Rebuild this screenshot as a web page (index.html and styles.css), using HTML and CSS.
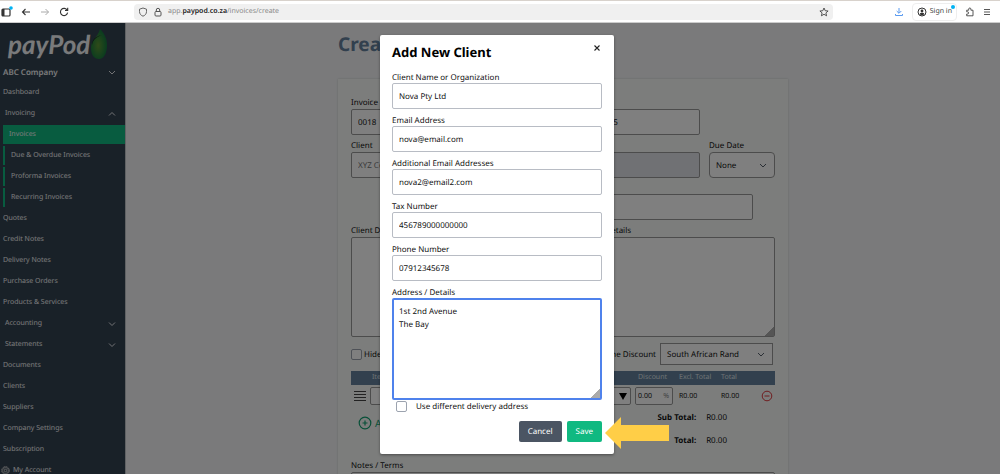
FILE: index.html
```html
<!DOCTYPE html>
<html lang="en">
<head>
  <meta charset="UTF-8" />
  <title>payPod - Create Invoice</title>
  <link rel="stylesheet" href="styles.css">
</head>
<body>

  <header class="browser-bar">
    <div class="nav-buttons">
      <button class="tool" aria-label="Sidebar">
        <svg width="12" height="12" viewBox="0 0 12 12"><rect x="1" y="3" width="8" height="7" rx="1" fill="none" stroke="#333" stroke-width="1.2"/><path d="M1 3h2.5v7H1z" fill="#333"/><circle cx="10" cy="2" r="1.8" fill="#00b3f4"/></svg>
      </button>
      <button class="tool" aria-label="Back">
        <svg width="12" height="12" viewBox="0 0 12 12"><path d="M10 6H2.500M5.500 3l-3 3 3 3" fill="none" stroke="#333" stroke-width="1.100"/></svg>
      </button>
      <button class="tool" aria-label="Forward" disabled>
        <svg width="12" height="12" viewBox="0 0 12 12"><path d="M2 6h7.500M6.500 3l3 3-3 3" fill="none" stroke="#aaa" stroke-width="1"/></svg>
      </button>
      <button class="tool" aria-label="Reload">
        <svg width="12" height="12" viewBox="0 0 12 12"><path d="M9.200 4.200A3.600 3.600 0 1 0 9.600 6.600M9.700 1.800v2.700H7" fill="none" stroke="#333" stroke-width="1.100"/></svg>
      </button>
    </div>
    <div class="address">
      <svg width="10" height="10" viewBox="0 0 10 10"><path d="M5 1l3.500 1.200v2.300C8.500 7 7 8.400 5 9.200 3 8.400 1.500 7 1.500 4.500V2.200z" fill="none" stroke="#555" stroke-width=".9"/></svg>
      <svg width="10" height="10" viewBox="0 0 10 10"><rect x="2" y="4.500" width="6" height="4.500" rx="1" fill="none" stroke="#555"/><path d="M3.300 4.500V3a1.700 1.700 0 0 1 3.400 0v1.500" fill="none" stroke="#555"/></svg>
      <span class="url">app.<b>paypod.co.za</b>/invoices/create</span>
      <svg class="star" width="10" height="10" viewBox="0 0 10 10"><path d="M5 1l1.200 2.700 2.900.3-2.200 1.900.7 2.900L5 7.300 2.400 8.800l.7-2.900L.9 4l2.900-.3z" fill="none" stroke="#444" stroke-width=".9"/></svg>
    </div>
    <div class="tools">
      <button class="tool" aria-label="Downloads">
        <svg width="10" height="10" viewBox="0 0 10 10"><path d="M5 1v5M2.700 4L5 6.300 7.300 4M1.500 7v1.500h7V7" fill="none" stroke="#5b9bf0"/></svg>
      </button>
      <button class="sign-in">
        <svg width="10" height="10" viewBox="0 0 10 10"><circle cx="5" cy="5" r="4" fill="none" stroke="#333"/><circle cx="5" cy="4" r="1.400" fill="#333"/><path d="M2.500 7.300a2.600 2 0 0 1 5 0L5 8.600z" fill="#333"/></svg>
        Sign in
        <span class="dot"></span>
      </button>
      <button class="tool" aria-label="Extensions">
        <svg width="10" height="10" viewBox="0 0 10 10"><path d="M1.700 3.200h2V2.100a1.100 1.100 0 0 1 2.200 0v1.100H8v5.600H1.700V7h.8a1.100 1.100 0 0 0 0-2.200h-.8z" fill="none" stroke="#444" stroke-width=".9"/></svg>
      </button>
      <button class="tool" aria-label="Menu">
        <svg width="8" height="10" viewBox="0 0 8 10"><path d="M1 2.500h6M1 5h6M1 7.500h6" stroke="#444" stroke-width=".9"/></svg>
      </button>
    </div>
  </header>

  <div class="app">
    <aside class="sidebar">
      <a class="logo" href="#">payPod<svg width="18" height="32" viewBox="0 0 18 32">
        <defs><radialGradient id="leaf" cx=".45" cy=".55" r=".5"><stop offset="0" stop-color="#5e9632"/><stop offset="1" stop-color="#187a3e"/></radialGradient></defs>
        <path d="M10 1c4 4 7 9 7 16 0 8-3 14-8 14S1 27 1 20C1 12 8 9 10 1z" fill="url(#leaf)"/>
        <path d="M2 15C4 9 8 8 12 7 7 9 3 11 2 17z" fill="#16251e"/>
      </svg></a>
      <button class="company">ABC Company <svg class="chevron" width="8" height="8" viewBox="0 0 8 8"><path d="M1 3l3 3 3-3"/></svg></button>
      <nav class="menu">
        <a href="#">Dashboard</a>
        <a class="group" href="#">Invoicing <svg class="chevron" width="8" height="8" viewBox="0 0 8 8"><path d="M1 5.500l3-3 3 3"/></svg></a>
        <a class="sub active" href="#">Invoices</a>
        <a class="sub" href="#">Due &amp; Overdue Invoices</a>
        <a class="sub" href="#">Proforma Invoices</a>
        <a class="sub" href="#">Recurring Invoices</a>
        <a href="#">Quotes</a>
        <a href="#">Credit Notes</a>
        <a href="#">Delivery Notes</a>
        <a href="#">Purchase Orders</a>
        <a href="#">Products &amp; Services</a>
        <a class="group" href="#">Accounting <svg class="chevron" width="8" height="8" viewBox="0 0 8 8"><path d="M1 2.500l3 3 3-3"/></svg></a>
        <a class="group" href="#">Statements <svg class="chevron" width="8" height="8" viewBox="0 0 8 8"><path d="M1 2.500l3 3 3-3"/></svg></a>
        <a href="#">Documents</a>
        <a href="#">Clients</a>
        <a href="#">Suppliers</a>
        <a href="#">Company Settings</a>
        <a href="#">Subscription</a>
        <a class="account" href="#"><svg width="9" height="9" viewBox="0 0 10 10"><circle cx="5" cy="5" r="4.200" fill="none" stroke="#ddd" stroke-dasharray="1.700 .5"/><circle cx="5" cy="5" r="3.200" fill="none" stroke="#ddd" stroke-width=".7"/><circle cx="5" cy="5" r="1.400" fill="none" stroke="#ddd" stroke-width=".9"/></svg>My Account</a>
      </nav>
    </aside>

    <main class="content">
      <h1>Create Invoice</h1>
      <form class="card">
        <div class="row">
          <div class="field number">
            <label for="invoice-number">Invoice Number</label>
            <input id="invoice-number" type="text" value="0018">
          </div>
          <div class="field date">
            <label for="invoice-date">Date</label>
            <input id="invoice-date" type="text" value="05 / 05 / 2025">
          </div>
        </div>
        <div class="row">
          <div class="field number">
            <label for="client">Client</label>
            <input id="client" type="text" placeholder="XYZ Company">
          </div>
          <div class="field date">
            <label for="reference">Reference</label>
            <input id="reference" type="text" disabled>
          </div>
          <div class="field due">
            <label for="due-date">Due Date</label>
            <select id="due-date"><option>None</option></select>
          </div>
        </div>
        <div class="row search">
          <input type="text" aria-label="Search">
        </div>
        <div class="row">
          <div class="field details">
            <label for="client-details">Client Details</label>
            <label for="company-details">Company Details</label>
          </div>
        </div>
        <div class="row boxes">
          <textarea id="client-details"></textarea>
          <textarea id="company-details"></textarea>
        </div>
        <div class="options">
          <label><input type="checkbox"> Hide Details</label>
          <label class="discount"><input type="checkbox"> Line Discount</label>
          <select class="currency" aria-label="Currency"><option>South African Rand</option></select>
        </div>

        <table class="items">
          <thead>
            <tr><th class="c-drag"></th><th>Item</th><th class="c-tax"></th><th class="c-disc">Discount</th><th class="c-excl">Excl. Total</th><th class="c-total">Total</th><th class="c-del"></th></tr>
          </thead>
          <tbody>
            <tr>
              <td><svg class="drag" width="12" height="10" viewBox="0 0 12 10"><path d="M0 .5h12M0 3.500h12M0 6.500h12M0 9.500h12" stroke="#444"/></svg></td>
              <td><input type="text" aria-label="Item"></td>
              <td><button class="tax" type="button" aria-label="Tax"><svg width="8" height="8" viewBox="0 0 8 8"><path d="M0 1h8L4 8z" fill="#000"/></svg></button></td>
              <td><span class="percent"><input type="text" value="0.00" aria-label="Discount"><span>%</span></span></td>
              <td>R0.00</td>
              <td>R0.00</td>
              <td><button class="remove" type="button" aria-label="Remove"><svg width="12" height="12" viewBox="0 0 12 12"><circle cx="6" cy="6" r="4.800"/><path d="M3.500 6h5"/></svg></button></td>
            </tr>
          </tbody>
        </table>

        <div class="summary">
          <button class="add-item" type="button"><svg width="14" height="14" viewBox="0 0 14 14"><circle cx="7" cy="7" r="5.800"/><path d="M4.500 7h5M7 4.500v5"/></svg>Add Item</button>
          <dl class="totals">
            <dt>Sub Total:</dt><dd>R0.00</dd>
            <dt>Total:</dt><dd>R0.00</dd>
          </dl>
        </div>
        <div class="field">
          <label for="notes">Notes / Terms</label>
          <textarea id="notes"></textarea>
        </div>
      </form>
    </main>

    <div class="overlay">
      <form class="modal" role="dialog" aria-labelledby="modal-title">
        <div class="modal-head">
          <h2 id="modal-title">Add New Client</h2>
          <button class="close" type="button" aria-label="Close"><svg width="8" height="8" viewBox="0 0 8 8"><path d="M1.500 1.500l5 5M6.500 1.500l-5 5" stroke="#222" stroke-width="1.100"/></svg></button>
        </div>
        <div class="field">
          <label for="name">Client Name or Organization</label>
          <input id="name" type="text" value="Nova Pty Ltd">
        </div>
        <div class="field">
          <label for="email">Email Address</label>
          <input id="email" type="text" value="nova@email.com">
        </div>
        <div class="field">
          <label for="emails">Additional Email Addresses</label>
          <input id="emails" type="text" value="nova2@email2.com">
        </div>
        <div class="field">
          <label for="tax">Tax Number</label>
          <input id="tax" type="text" value="456789000000000">
        </div>
        <div class="field">
          <label for="phone">Phone Number</label>
          <input id="phone" type="text" value="07912345678">
        </div>
        <div class="field last">
          <label for="address">Address / Details</label>
          <textarea class="focused" id="address">1st 2nd Avenue
The Bay</textarea>
        </div>
        <label class="delivery"><input type="checkbox"> Use different delivery address</label>
        <div class="actions">
          <button class="btn cancel" type="button">Cancel</button>
          <button class="btn save" type="submit">Save</button>
          <svg class="arrow" width="64" height="32" viewBox="0 0 64 32"><path d="M0 16L16 0v8h48v16H16v8z" fill="#ffce47"/></svg>
        </div>
      </form>
    </div>
  </div>

</body>
</html>
```
FILE: styles.css
```css
* {
  box-sizing: border-box;
}
body {
  margin: 0;
  height: 100vh;
  display: flex;
  flex-direction: column;
  overflow: hidden;
  font-family: "Noto Sans", sans-serif;
  font-size: 8px;
  line-height: 13px;
  text-rendering: geometricPrecision;
  color: #111;
}
button, input, select, textarea {
  font: inherit;
  color: inherit;
  margin: 0;
  text-rendering: inherit;
}
button {
  border: none;
  background: none;
  padding: 0;
  cursor: pointer;
}
a {
  color: inherit;
  text-decoration: none;
}
svg {
  display: block;
  flex: none;
}

/* browser toolbar */
.browser-bar {
  flex: none;
  height: 23px;
  display: flex;
  align-items: center;
  border-top: 1px solid #d8d2cc;
  border-bottom: 1px solid #ccc;
  background: #fff;
  font-size: 7px;
}
.nav-buttons {
  display: flex;
  gap: 7px;
  padding-left: 1px;
  width: 134px;
}
.address {
  flex: 1;
  display: flex;
  align-items: center;
  gap: 5px;
  height: 16px;
  padding: 0 4px;
  background: #f0f0f0;
  border-radius: 4px;
  color: #888;
}
.address b {
  font-weight: 600;
  color: #222;
}
.star {
  margin-left: auto;
}
.tools {
  display: flex;
  align-items: center;
  justify-content: flex-end;
  gap: 8px;
  width: 167px;
  padding-right: 9px;
}
.sign-in {
  position: relative;
  display: flex;
  align-items: center;
  gap: 3px;
  height: 18px;
  padding: 0 4px;
  border: 1px solid #eee;
  border-radius: 4px;
  color: #444;
}
.dot {
  position: absolute;
  top: 1px;
  right: 1px;
  width: 4px;
  height: 4px;
  border-radius: 50%;
  background: #00b3f4;
}

.app {
  position: relative;
  flex: 1;
  min-height: 0;
  display: flex;
}

/* sidebar */
.sidebar {
  flex: none;
  width: 126px;
  overflow: hidden;
  background: #334250;
  border-right: 1px solid #c0c4c8;
  color: #f3f4f6;
  font-size: 7px;
}
.logo {
  display: flex;
  align-items: center;
  height: 40px;
  padding: 2px 0 0 8px;
  font: italic bold 26px Lato, sans-serif;
}
.company {
  width: 100%;
  display: flex;
  align-items: center;
  justify-content: space-between;
  height: 20px;
  padding: 0 9px 2px 3px;
  font-size: 8px;
  font-weight: 600;
}
.chevron {
  fill: none;
  stroke: #e5e7eb;
}
.menu a {
  display: flex;
  align-items: center;
  height: 19px;
  margin-bottom: 2px;
  padding: 0 9px 0 3px;
}
.menu .group {
  justify-content: space-between;
  padding-left: 5px;
}
.menu .sub {
  margin-left: 3px;
  padding-left: 6px;
  border-left: 2px solid #10b981;
}
.menu .active {
  padding-left: 4px;
  background: #10b981;
}
.menu .account {
  gap: 3px;
  padding-left: 1px;
}

/* shared form parts */
.field {
  flex: 1;
  display: flex;
  flex-direction: column;
}
input[type="text"], textarea, select {
  width: 100%;
  height: 26px;
  padding: 0 6px;
  border: 1px solid #b8bcc4;
  border-radius: 2px;
  background-color: #fff;
  outline: none;
}
textarea {
  display: block;
  height: 100px;
  padding: 6px;
}
textarea::-webkit-resizer {
  background: linear-gradient(135deg, transparent 70%, #aaa 70%);
}
select {
  appearance: none;
  background: #fff url("data:image/svg+xml,%3Csvg xmlns='http://www.w3.org/2000/svg' width='8' height='8' fill='none' stroke='%23555f6b'%3E%3Cpath d='M1 3l3 3 3-3'/%3E%3C/svg%3E") no-repeat right 7px center;
}
input[type="checkbox"] {
  appearance: none;
  width: 11px;
  height: 11px;
  border: 1px solid #9ca3af;
  border-radius: 2px;
  background: #fff;
}

/* invoice page */
.content {
  flex: 1;
  overflow: hidden;
  background: #f4f5f7;
}
.content h1 {
  max-width: 450px;
  margin: 9px auto 23px;
  font-size: 19px;
  line-height: 24px;
  color: #64809c;
}
.card {
  max-width: 450px;
  height: 100%;
  margin: 0 auto;
  padding: 17px 13px 0;
  background: #f8fbf9;
  box-shadow: 0 0 2px #ccc;
}
.row {
  display: flex;
  gap: 9px;
  margin-bottom: 4px;
}
.card input[type="text"], .card textarea, .card select {
  border-color: #999;
}
.number {
  flex: none;
  width: 200px;
}
.date {
  flex: none;
  width: 140px;
}
.due select {
  border-radius: 4px;
}
.card input:disabled {
  background: #e0e2e8;
}
.search {
  margin-top: 16px;
  padding: 0 22px 0 45px;
}
.details {
  display: grid;
  grid-template-columns: 1fr 1fr;
  column-gap: 9px;
}
.boxes {
  margin-top: -4px;
}
.options {
  display: flex;
  align-items: center;
  gap: 4px;
  margin: 6px 2px 6px 0;
}
.options label {
  display: flex;
  align-items: center;
  gap: 2px;
}
.options .discount {
  margin-left: auto;
}
.options .currency {
  width: 113px;
  height: 22px;
  border-radius: 0;
}
.items {
  width: 100%;
  table-layout: fixed;
  border-collapse: collapse;
}
.items th {
  height: 14px;
  padding: 0 2px;
  background: #64809c;
  color: #dde2e8;
  font-size: 7px;
  line-height: 14px;
  font-weight: 400;
  text-align: left;
}
.items td {
  padding: 2px 2px 0 0;
  font-size: 7px;
}
.card .items input {
  height: 18px;
}
.c-drag { width: 19px; }
.c-tax { width: 62px; }
.c-disc { width: 44px; }
.c-excl { width: 42px; }
.c-total { width: 40px; }
.c-del { width: 16px; }
.items td:nth-child(5), .items td:nth-child(6) {
  padding-left: 2px;
}
.items .c-disc {
  padding-left: 5px;
}
.drag {
  margin-left: 3px;
}
.tax {
  display: flex;
  align-items: center;
  justify-content: flex-end;
  width: 100%;
  height: 18px;
  padding-right: 3px;
  border: 1px solid #999;
  border-radius: 2px;
  background: #fff;
}
.percent {
  display: flex;
  align-items: center;
  width: 38px;
  height: 18px;
  margin-left: 2px;
  border: 1px solid #999;
  border-radius: 2px;
  background: #fff;
}
.card .percent input {
  height: 16px;
  padding: 0 2px;
  border: none;
}
.percent span {
  padding-right: 3px;
  color: #888;
}
.remove {
  display: block;
  margin: 0 0 0 auto;
}
.remove svg {
  fill: none;
  stroke: #e0393e;
}
.summary {
  display: flex;
  justify-content: space-between;
  align-items: flex-start;
  padding: 6px 48px 12px 7px;
}
.add-item {
  display: flex;
  align-items: center;
  gap: 3px;
  margin-top: 5px;
  font-size: 10px;
  color: #10a070;
}
.add-item svg {
  fill: none;
  stroke: #10a070;
  stroke-width: 1.2;
}
.totals {
  display: grid;
  grid-template-columns: auto auto;
  gap: 10px;
  margin: 0;
  text-align: right;
}
.totals dt {
  font-weight: 700;
}
.totals dd {
  margin: 0;
}

/* add client dialog */
.overlay {
  position: absolute;
  inset: 0;
  display: flex;
  justify-content: center;
  align-items: flex-start;
  padding: 12px 6px 0 0;
  background: rgba(0, 0, 0, 0.5);
}
.modal {
  width: 234px;
  padding: 9px 12px 12px;
  border-radius: 2px;
  background: #fff;
  box-shadow: 0 1px 3px rgba(0, 0, 0, 0.4);
}
.modal-head {
  display: flex;
  justify-content: space-between;
  align-items: flex-start;
  height: 28px;
}
.modal h2 {
  margin: 0;
  font-size: 13px;
  line-height: 17px;
  color: #000;
}
.close {
  padding: 0 1px;
}
.modal .field {
  margin-bottom: 6px;
}
.modal .field label {
  line-height: 11px;
}
.modal .last {
  margin-bottom: 0;
}
.modal textarea.focused {
  height: 102px;
  padding: 5px;
  border: 2px solid #4f82ec;
}
.delivery {
  display: flex;
  align-items: center;
  gap: 9px;
  padding-left: 4px;
}
.actions {
  position: relative;
  display: flex;
  justify-content: flex-end;
  gap: 5px;
  margin-top: 8px;
}
.btn {
  height: 21px;
  padding: 0 9px;
  border-radius: 2px;
  color: #fff;
}
.cancel {
  background: #4b5563;
}
.save {
  background: #10b981;
}
.arrow {
  position: absolute;
  left: 100%;
  top: -4px;
  margin-left: 3px;
}
```
